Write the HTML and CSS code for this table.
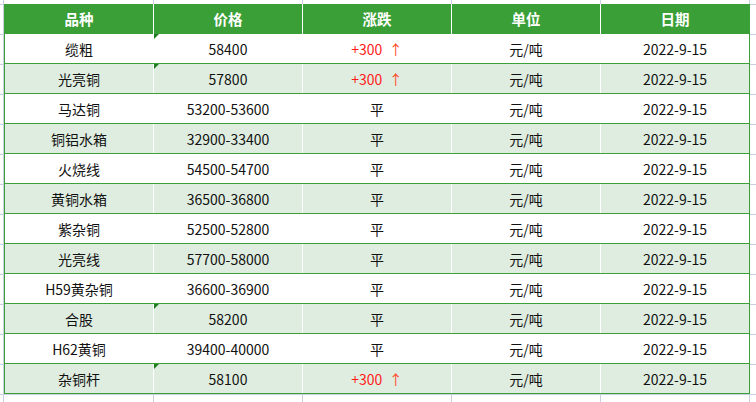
FILE: index.html
```html
<!DOCTYPE html>
<html lang="zh-CN">
<head>
<meta charset="utf-8">
<title>铜价表</title>
<link rel="stylesheet" href="styles.css">
</head>
<body>
<div class="sheet">
<table class="prices">
  <colgroup><col><col><col><col><col></colgroup>
  <thead>
    <tr><th>品种</th><th>价格</th><th>涨跌</th><th>单位</th><th>日期</th></tr>
  </thead>
  <tbody>
    <tr><td>缆粗</td><td class="flag">58400</td><td class="up">+300&nbsp;&nbsp;<span class="arrow">↑</span></td><td>元/吨</td><td>2022-9-15</td></tr>
    <tr class="alt"><td>光亮铜</td><td class="flag">57800</td><td class="up">+300&nbsp;&nbsp;<span class="arrow">↑</span></td><td>元/吨</td><td>2022-9-15</td></tr>
    <tr><td>马达铜</td><td>53200-53600</td><td>平</td><td>元/吨</td><td>2022-9-15</td></tr>
    <tr class="alt"><td>铜铝水箱</td><td>32900-33400</td><td>平</td><td>元/吨</td><td>2022-9-15</td></tr>
    <tr><td>火烧线</td><td>54500-54700</td><td>平</td><td>元/吨</td><td>2022-9-15</td></tr>
    <tr class="alt"><td>黄铜水箱</td><td>36500-36800</td><td>平</td><td>元/吨</td><td>2022-9-15</td></tr>
    <tr><td>紫杂铜</td><td>52500-52800</td><td>平</td><td>元/吨</td><td>2022-9-15</td></tr>
    <tr class="alt"><td>光亮线</td><td>57700-58000</td><td>平</td><td>元/吨</td><td>2022-9-15</td></tr>
    <tr><td>H59黄杂铜</td><td>36600-36900</td><td>平</td><td>元/吨</td><td>2022-9-15</td></tr>
    <tr class="alt"><td>合股</td><td class="flag">58200</td><td>平</td><td>元/吨</td><td>2022-9-15</td></tr>
    <tr><td>H62黄铜</td><td>39400-40000</td><td>平</td><td>元/吨</td><td>2022-9-15</td></tr>
    <tr class="alt"><td>杂铜杆</td><td class="flag">58100</td><td class="up">+300&nbsp;&nbsp;<span class="arrow">↑</span></td><td>元/吨</td><td>2022-9-15</td></tr>
  </tbody>
</table>
</div>
</body>
</html>
```

FILE: styles.css
```css
html, body {
  margin: 0;
  padding: 0;
}
body {
  width: 756px;
  height: 402px;
  overflow: hidden;
  background-color: #fff;
  background-image:
    linear-gradient(to right, transparent 153px, #c8d0e0 153px, #c8d0e0 154px, transparent 154px),
    linear-gradient(to right, transparent 302px, #c8d0e0 302px, #c8d0e0 303px, transparent 303px),
    linear-gradient(to right, transparent 451px, #c8d0e0 451px, #c8d0e0 452px, transparent 452px),
    linear-gradient(to right, transparent 600px, #c8d0e0 600px, #c8d0e0 601px, transparent 601px),
    linear-gradient(to right, transparent 749px, #c8d0e0 749px, #c8d0e0 750px, transparent 750px),
    linear-gradient(to right, transparent 3px, #c8d0e0 3px, #c8d0e0 4px, transparent 4px),
    repeating-linear-gradient(to bottom, #c8d0e0 0, #c8d0e0 1px, transparent 1px, transparent 30px);
  background-position: 0 0, 0 0, 0 0, 0 0, 0 0, 0 0, 0 4px;
  font-family: "Noto Sans CJK SC", "Noto Sans", sans-serif;
}
.sheet {
  padding: 4px 0 0 4px;
}
.prices {
  border-collapse: collapse;
  table-layout: fixed;
  width: 746px;
  background: #fff;
  border-left: 1px solid #3aa037;
  border-right: 1px solid #3aa037;
}
.prices col {
  width: 149px;
}
.prices th {
  height: 30px;
  padding: 0;
  background: #3a9f37;
  color: #fff;
  font-size: 14.5px;
  font-weight: bold;
  text-align: center;
  vertical-align: middle;
  border-left: 1px solid #fff;
  line-height: 1;
}
.prices th:first-child {
  border-left: none;
}
.prices td {
  height: 29px;
  padding: 0;
  text-align: center;
  vertical-align: middle;
  font-size: 14px;
  line-height: 1;
  color: #111;
  border-bottom: 1px solid #3aa037;
  border-left: 1px solid #fff;
}
.prices td:first-child {
  border-left: none;
}
.prices tr.alt td {
  background: #dfede0;
}
.prices td.flag {
  position: relative;
}
.prices td.flag::before {
  content: "";
  position: absolute;
  left: 0;
  top: 0;
  width: 0;
  height: 0;
  border-top: 5px solid #1e7d1e;
  border-right: 5px solid transparent;
}
.prices td.up {
  color: #ff1a1a;
}
.prices .arrow {
  color: #ff4a2a;
}
```
